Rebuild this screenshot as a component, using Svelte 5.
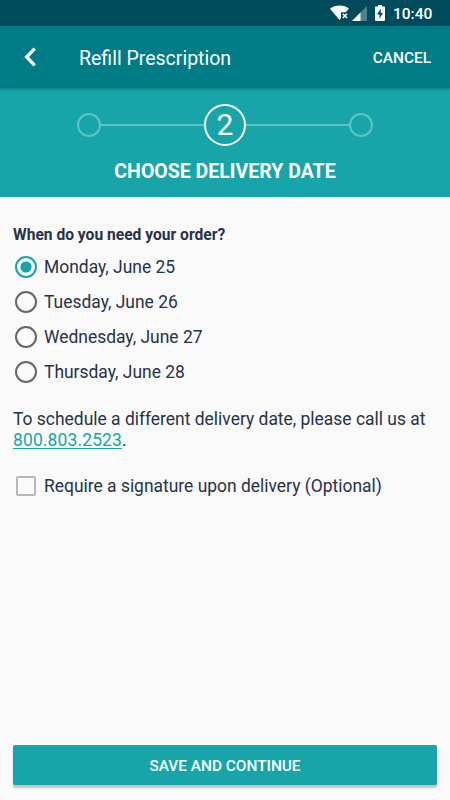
<script lang="ts">
  const dates = [
    'Monday, June 25',
    'Tuesday, June 26',
    'Wednesday, June 27',
    'Thursday, June 28',
  ];

  let selected = $state(dates[0]);
  let signature = $state(false);
</script>

<div class="screen">
  <div class="status-bar">
    <svg class="wifi" width="20" height="16" viewBox="0 0 20 16" aria-hidden="true">
      <path d="M0 3.7C5 -.5 14 -.5 19 3.7L15.5 7.3H11V13.2L9.5 15Z" fill="#fff" />
      <path d="M12.8 8.7l4.2 4.4M17 8.7l-4.2 4.4" stroke="#fff" stroke-width="1.5" />
    </svg>
    <svg class="signal" width="15" height="15" viewBox="0 0 15 15" aria-hidden="true">
      <path d="M0 15L15 0V15Z" fill="#4d8390" />
      <path d="M0 15L8.5 6.5V15Z" fill="#fff" />
    </svg>
    <svg class="battery" width="10" height="16" viewBox="0 0 10 16" aria-hidden="true">
      <path d="M3 0H7V1.5H9Q10 1.5 10 2.5V15Q10 16 9 16H1Q0 16 0 15V2.5Q0 1.5 1 1.5H3Z" fill="#fff" />
      <path d="M5.8 3.7L2 9.4H4.5V13.8L8 8H5.8Z" fill="#004b5b" />
    </svg>
    <span class="clock">10:40</span>
  </div>

  <header class="app-bar">
    <button type="button" class="back" aria-label="Back">
      <svg width="13" height="20" viewBox="0 0 13 20" aria-hidden="true">
        <path d="M10.7 1.6L2.6 10l8.1 8.4" fill="none" stroke="#fff" stroke-width="3.3" />
      </svg>
    </button>
    <h1>Refill Prescription</h1>
    <button type="button" class="cancel">CANCEL</button>
  </header>

  <section class="stepper">
    <div class="steps">
      <span class="dot"></span>
      <span class="line"></span>
      <span class="current">2</span>
      <span class="line"></span>
      <span class="dot"></span>
    </div>
    <h2>CHOOSE DELIVERY DATE</h2>
  </section>

  <main>
    <h3>When do you need your order?</h3>
    <div class="options">
      {#each dates as date}
        <label>
          <input type="radio" name="date" value={date} bind:group={selected} />
          <span>{date}</span>
        </label>
      {/each}
    </div>

    <p>
      To schedule a different delivery date, please call us at
      <a href="tel:8008032523">800.803.2523</a>.
    </p>

    <label class="signature">
      <input type="checkbox" bind:checked={signature} />
      <span>Require a signature upon delivery (Optional)</span>
    </label>

    <button type="button" class="save">SAVE AND CONTINUE</button>
  </main>
</div>

<style>
  .screen {
    display: flex;
    flex-direction: column;
    width: 450px;
    height: 800px;
    overflow: hidden;
    background: #fafafa;
    color: #283246;
    font-family: Roboto, sans-serif;
    font-size: 17.45px;
  }

  h1, h2, h3, p {
    margin: 0;
  }

  button {
    padding: 0;
    border: none;
    background: none;
    color: #fff;
    font-family: inherit;
    cursor: pointer;
  }

  .status-bar {
    display: flex;
    align-items: center;
    flex: none;
    box-sizing: border-box;
    height: 26px;
    padding-left: 330px;
    background: #004b5b;
    color: #fff;
  }

  .signal {
    margin-left: 2px;
  }

  .battery {
    margin-left: 8px;
  }

  .clock {
    margin-left: 8px;
    padding-top: 1px;
    font-size: 15.5px;
    font-weight: 500;
  }

  .app-bar {
    position: relative;
    display: flex;
    align-items: center;
    flex: none;
    box-sizing: border-box;
    height: 62px;
    padding: 0 19px 0 24px;
    background: #007c87;
    box-shadow: 0 1px 3px rgba(0, 50, 55, 0.4);
    color: #fff;
  }

  .back {
    display: flex;
    width: 55px;
  }

  h1 {
    flex: 1;
    padding-top: 2px;
    font-size: 19.5px;
    font-weight: 400;
  }

  .cancel {
    padding-top: 2px;
    font-size: 15.4px;
    font-weight: 500;
  }

  .stepper {
    flex: none;
    box-sizing: border-box;
    height: 109px;
    padding-top: 16px;
    background: #17a5a9;
    color: #fff;
    text-align: center;
  }

  .steps {
    display: flex;
    align-items: center;
    width: 296px;
    height: 42px;
    margin: 0 auto 0 77px;
  }

  .dot {
    box-sizing: border-box;
    width: 24px;
    height: 24px;
    border: 2px solid #5fc2c5;
    border-radius: 50%;
  }

  .line {
    flex: 1;
    height: 2px;
    background: #5fc2c5;
  }

  .current {
    box-sizing: border-box;
    width: 42px;
    height: 42px;
    border: 2px solid #fff;
    border-radius: 50%;
    font-size: 30px;
    line-height: 38px;
  }

  h2 {
    margin-top: 14px;
    font-size: 19.5px;
    font-weight: 700;
    line-height: 24px;
  }

  main {
    display: flex;
    flex: 1;
    flex-direction: column;
    padding: 28px 13px 15px;
  }

  h3 {
    font-size: 15.6px;
    font-weight: 700;
    line-height: 20px;
  }

  .options {
    margin-top: 4px;
  }

  label {
    display: flex;
    align-items: center;
    height: 35px;
  }

  input {
    appearance: none;
    box-sizing: border-box;
    flex: none;
    margin: 0;
  }

  input[type='radio'] {
    width: 22px;
    height: 22px;
    margin: 0 7px 0 2px;
    border: 2px solid #666;
    border-radius: 50%;
  }

  input[type='radio']:checked {
    border-color: #17a5a9;
    background: radial-gradient(circle, #17a5a9 5.2px, transparent 5.9px);
  }

  p {
    margin-top: 20px;
    line-height: 21px;
  }

  a {
    color: #17a5a9;
    letter-spacing: 0.15px;
    text-decoration-thickness: 1px;
    text-underline-offset: 2px;
  }

  .signature {
    margin-top: 17px;
  }

  input[type='checkbox'] {
    width: 20px;
    height: 20px;
    margin: 0 8px 0 3px;
    border: 2px solid #b5b9bd;
    border-radius: 2px;
  }

  input[type='checkbox']:checked {
    border-color: #17a5a9;
    background: #17a5a9;
  }

  .save {
    height: 40px;
    padding-top: 2px;
    margin-top: auto;
    border-radius: 2px;
    background: #17a5a9;
    box-shadow: 0 3px 2px rgba(0, 0, 0, 0.22);
    font-size: 15.4px;
    font-weight: 500;
  }
</style>
